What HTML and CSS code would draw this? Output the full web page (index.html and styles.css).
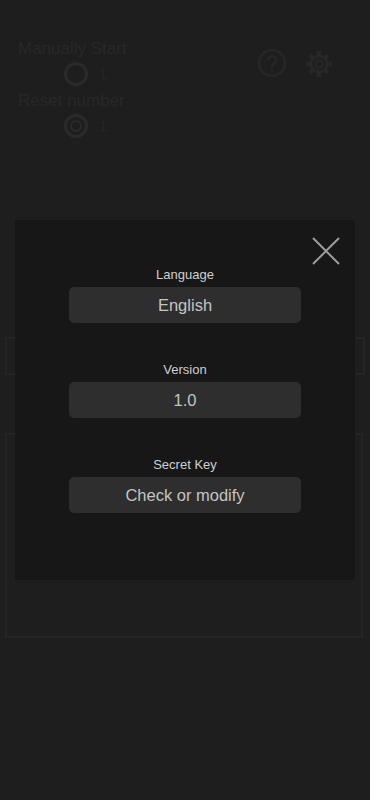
FILE: index.html
```html
<!DOCTYPE html>
<html>
<head>
<meta charset="utf-8">
<link rel="stylesheet" href="styles.css">
</head>
<body>
<div class="page">
  <div class="top">
    <div class="settings">
      <div class="group">
        <div class="glabel">Manually Start</div>
        <div class="grow">
          <svg class="gicon" width="26" height="26" viewBox="0 0 26 26"><circle cx="13" cy="13" r="10.5" fill="none" stroke="#2a2a2a" stroke-width="3"/></svg>
          <span class="gval">1</span>
        </div>
      </div>
      <div class="group">
        <div class="glabel">Reset number</div>
        <div class="grow">
          <svg class="gicon" width="26" height="26" viewBox="0 0 26 26"><circle cx="13" cy="13" r="10.5" fill="none" stroke="#2a2a2a" stroke-width="3"/><circle cx="13" cy="13" r="5" fill="none" stroke="#2a2a2a" stroke-width="2"/></svg>
          <span class="gval">1</span>
        </div>
      </div>
    </div>
    <div class="tools">
      <svg width="30" height="30" viewBox="0 0 30 30"><circle cx="15" cy="15" r="13" fill="none" stroke="#272727" stroke-width="2.5"/><path d="M11 12a4 4 0 1 1 6 3.5c-1.5 1-2 1.5-2 3.5" fill="none" stroke="#272727" stroke-width="2.5"/><circle cx="15" cy="22" r="1.5" fill="#272727"/></svg>
      <svg width="32" height="32" viewBox="0 0 32 32"><circle cx="16" cy="16" r="8" fill="none" stroke="#272727" stroke-width="3"/><circle cx="16" cy="16" r="3.5" fill="none" stroke="#272727" stroke-width="2"/><g stroke="#272727" stroke-width="4"><path d="M16 3v5M16 24v5M3 16h5M24 16h5M7 7l3.5 3.5M21.5 21.5L25 25M7 25l3.5-3.5M21.5 10.5L25 7"/></g></svg>
    </div>
  </div>
  <div class="box box1"></div>
  <div class="box box2"></div>
</div>

<div class="modal">
  <button class="close" aria-label="close">
    <svg width="28" height="28" viewBox="0 0 28 28"><path d="M1 1L27 27M27 1L1 27" stroke="#9c9c9c" stroke-width="2" fill="none"/></svg>
  </button>
  <div class="field">
    <div class="flabel">Language</div>
    <div class="fbtn">English</div>
  </div>
  <div class="field">
    <div class="flabel">Version</div>
    <div class="fbtn">1.0</div>
  </div>
  <div class="field">
    <div class="flabel">Secret Key</div>
    <div class="fbtn">Check or modify</div>
  </div>
</div>
</body>
</html>
```

FILE: styles.css
```css
html, body {
  margin: 0;
  padding: 0;
  background: #1e1e1e;
  font-family: "Liberation Sans", Arial, sans-serif;
  height: 800px;
  overflow: hidden;
}
.page {
  padding: 0 5px;
}
.top {
  display: flex;
  justify-content: space-between;
  padding: 39px 30px 0 13px;
  height: 270px;
  box-sizing: border-box;
}
.settings {
  display: flex;
  flex-direction: column;
  gap: 2px;
}
.glabel {
  font-size: 17px;
  line-height: 20px;
  color: #282828;
}
.grow {
  display: flex;
  align-items: center;
  gap: 10px;
  padding-left: 45px;
  height: 30px;
}
.gval {
  font-size: 14px;
  color: #272727;
}
.tools {
  display: flex;
  gap: 16px;
  padding-top: 9px;
}
.box {
  border: 2px solid #252525;
  box-sizing: border-box;
}
.box1 {
  margin-top: 67px;
  height: 38px;
}
.box2 {
  margin-top: 58px;
  height: 205px;
  margin-right: 2px;
}
.modal {
  position: absolute;
  left: 15px;
  top: 220px;
  width: 340px;
  height: 360px;
  background: #171717;
  padding-top: 47px;
  box-sizing: border-box;
  display: flex;
  flex-direction: column;
  align-items: center;
  gap: 39px;
}
.close {
  position: absolute;
  top: 17px;
  right: 15px;
  width: 28px;
  height: 28px;
  padding: 0;
  border: 0;
  background: none;
}
.close svg {
  display: block;
}
.field {
  display: flex;
  flex-direction: column;
  align-items: center;
  gap: 4px;
}
.flabel {
  font-size: 13px;
  line-height: 16px;
  color: #cfcfcf;
}
.fbtn {
  width: 232px;
  height: 36px;
  border-radius: 5px;
  background: #2e2e2e;
  color: #c4c4c4;
  font-size: 16.5px;
  display: flex;
  align-items: center;
  justify-content: center;
}
```
